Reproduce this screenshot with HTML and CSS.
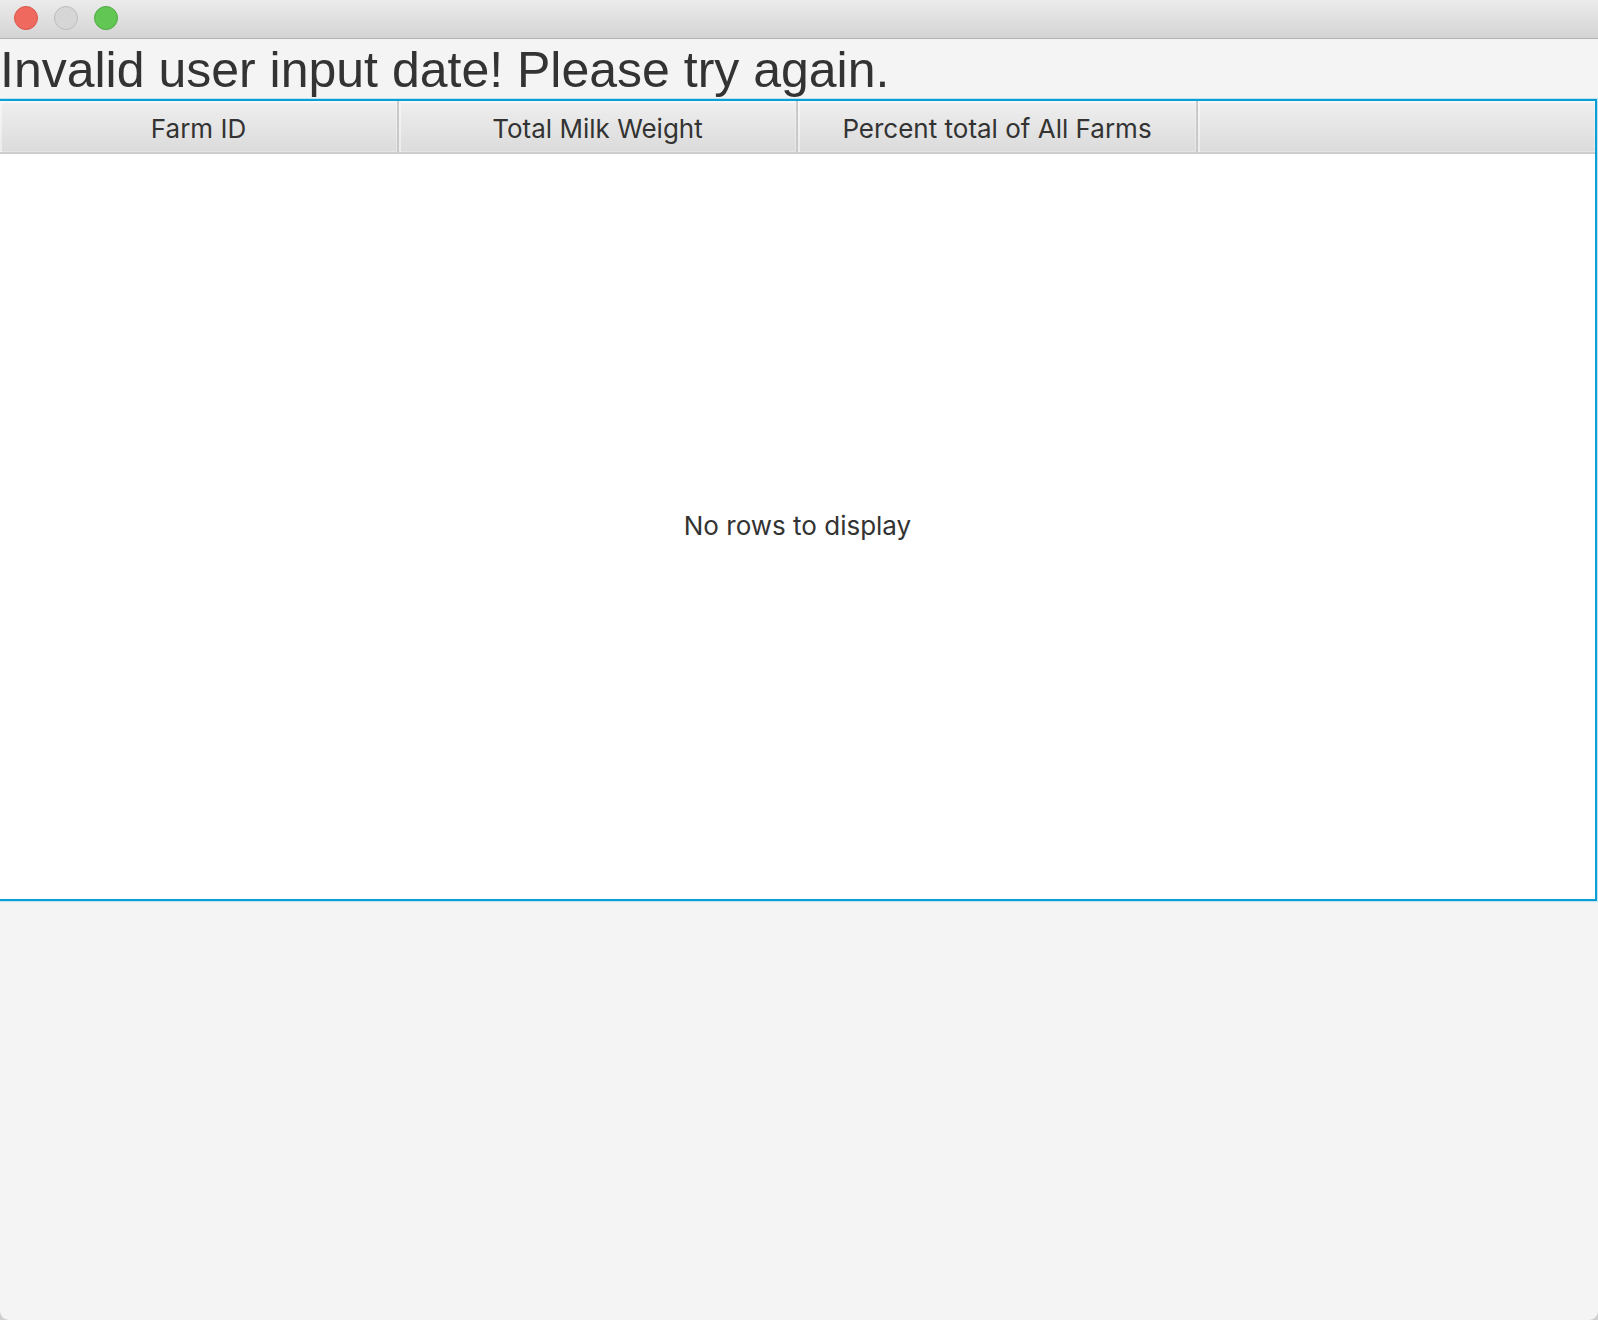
FILE: index.html
```html
<!DOCTYPE html>
<html lang="en">
<head>
<meta charset="utf-8">
<title>Farm Report</title>
<link rel="stylesheet" href="styles.css">
</head>
<body>
<div class="window">
  <div class="titlebar">
    <span class="light light-close"></span>
    <span class="light light-min"></span>
    <span class="light light-max"></span>
  </div>
  <div class="content">
    <h1 class="message">Invalid user input date! Please try again.</h1>
    <div class="table">
      <div class="table-header">
        <div class="col-head">Farm ID</div>
        <div class="col-head">Total Milk Weight</div>
        <div class="col-head">Percent total of All Farms</div>
        <div class="col-head col-filler"></div>
      </div>
      <div class="table-body">
        <span class="placeholder">No rows to display</span>
      </div>
    </div>
  </div>
</div>
</body>
</html>
```

FILE: styles.css
```css
html, body {
  margin: 0;
  padding: 0;
  background: #cfcfcf;
}

body {
  width: 1598px;
  height: 1320px;
  overflow: hidden;
}

.window {
  width: 1598px;
  height: 1320px;
  background: #f4f4f4;
  border-radius: 0 0 9px 9px;
  overflow: hidden;
  display: flex;
  flex-direction: column;
}

.titlebar {
  border-bottom: 1px solid #b3b3b3;
  background: linear-gradient(to bottom, #ebebeb, #d4d4d4);
  display: flex;
  align-items: center;
  gap: 16px;
  padding-left: 14px;
  padding-bottom: 3px;
  height: 35px;
}

.light {
  width: 22px;
  height: 22px;
  border-radius: 50%;
  border: 1px solid transparent;
}

.light-close {
  background: #f0695e;
  border-color: #d8554b;
}

.light-min {
  background: #d6d6d6;
  border-color: #bdbdbd;
}

.light-max {
  background: #62c654;
  border-color: #4fa944;
}

.content {
  flex: 1;
  display: flex;
  flex-direction: column;
}

.message {
  margin: 0;
  padding-top: 4px;
  height: 56px;
  line-height: 54px;
  font-family: "Liberation Sans", Arial, sans-serif;
  font-weight: normal;
  font-size: 50px;
  color: #333333;
  white-space: nowrap;
}

.table {
  margin-left: -2px;
  width: 1599px;
  height: 802px;
  box-sizing: border-box;
  border: 2px solid #0b9fd8;
  box-shadow: 0 0 0 1px rgba(11, 159, 216, 0.22);
  background: #ffffff;
  display: flex;
  flex-direction: column;
}

.table-header {
  display: grid;
  grid-template-columns: 399px 399px 400px 1fr;
  height: 51px;
  border-bottom: 2px solid #cfcfcf;
  background: linear-gradient(to bottom, #efefef, #dbdbdb);
}

.col-head {
  display: flex;
  align-items: center;
  justify-content: center;
  border-right: 2px solid #c9c9c9;
  box-shadow: inset 2px 2px 0 rgba(255, 255, 255, 0.45), inset -1px -1px 0 rgba(255, 255, 255, 0.3);
  font-family: Inter, "Noto Sans", sans-serif;
  font-size: 26px;
  color: #333333;
  padding-top: 3px;
}

.col-filler {
  border-right: none;
}

.table-body {
  flex: 1;
  display: flex;
  align-items: center;
  justify-content: center;
}

.placeholder {
  font-family: Inter, "Noto Sans", sans-serif;
  font-size: 26px;
  color: #333333;
  margin-top: -2px;
}
```
